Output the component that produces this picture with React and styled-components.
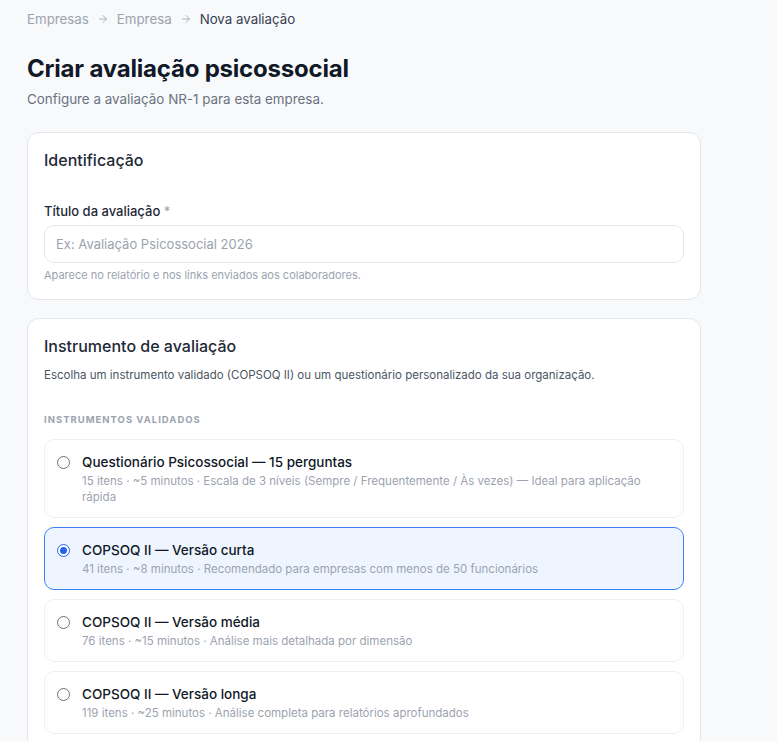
import React from "react";
import styled, { createGlobalStyle } from "styled-components";

const Global = createGlobalStyle`
  html, body { margin: 0; padding: 0; background: #f8f9fb; }
  body { font-family: Inter, "Noto Sans", sans-serif; color: #111827; -webkit-font-smoothing: antialiased; }
  * { box-sizing: border-box; }
`;

const Page = styled.div`
  padding: 9px 27px 40px;
  max-width: 728px;
`;

const Crumbs = styled.nav`
  display: flex;
  align-items: center;
  gap: 8px;
  font-size: 13.3px;
  line-height: 20px;
  color: #9ca3af;
`;

const Crumb = styled.span`
  color: ${(p) => (p.$current ? "#374151" : "#9ca3af")};
`;

const Arrow = styled.span`
  display: inline-flex;
  color: #a3a8b3;
`;

const Title = styled.h1`
  margin: 24px 0 0;
  font-size: 24px;
  line-height: 32px;
  font-weight: 700;
  letter-spacing: -0.2px;
  color: #111827;
`;

const Subtitle = styled.p`
  margin: 4px 0 0;
  font-size: 13.4px;
  line-height: 20px;
  color: #6b7280;
`;

const Card = styled.section`
  background: #fff;
  border: 1px solid #e5e7eb;
  border-radius: 12px;
  padding: 15px 16px 16px;
  margin-top: ${(p) => p.$mt}px;
`;

const CardTitle = styled.h2`
  margin: 0;
  font-size: 16px;
  line-height: 24px;
  font-weight: 500;
  color: #1f2937;
`;

const Label = styled.label`
  display: block;
  margin-top: 29px;
  font-size: 13px;
  line-height: 20px;
  font-weight: 500;
  color: #1f2937;
`;

const Required = styled.span`
  color: #9ca3af;
  font-weight: 400;
`;

const Input = styled.input`
  display: block;
  width: 100%;
  height: 38px;
  margin-top: 4px;
  border: 1px solid #e5e7eb;
  border-radius: 10px;
  padding: 0 11px;
  font-family: inherit;
  font-size: 13px;
  color: #111827;
  background: #fff;
  outline: none;
  &::placeholder { color: #9ca3af; }
`;

const Help = styled.p`
  margin: 4px 0 0;
  font-size: 11px;
  line-height: 16px;
  color: #9ca3af;
`;

const CardDesc = styled.p`
  margin: 9px 0 0;
  font-size: 11.5px;
  line-height: 16px;
  color: #4b5563;
`;

const SectionLabel = styled.div`
  margin-top: 29px;
  font-size: 9.5px;
  line-height: 16px;
  font-weight: 700;
  letter-spacing: 1px;
  text-transform: uppercase;
  color: #9ca3af;
`;

const Options = styled.div`
  display: flex;
  flex-direction: column;
  gap: 9px;
  margin-top: 11px;
`;

const Option = styled.label`
  display: flex;
  align-items: flex-start;
  gap: 12px;
  padding: 12px;
  border: 1px solid ${(p) => (p.$selected ? "#3b82f6" : "#eef0f3")};
  background: ${(p) => (p.$selected ? "#eef5ff" : "#fff")};
  border-radius: 10px;
  cursor: pointer;
`;

const Radio = styled.span`
  flex: none;
  width: 13px;
  height: 13px;
  margin-top: 3.5px;
  border-radius: 50%;
  border: 1px solid ${(p) => (p.$checked ? "#2563eb" : "#6b7280")};
  background: #fff;
  display: flex;
  align-items: center;
  justify-content: center;
  &::after {
    content: "";
    width: 7px;
    height: 7px;
    border-radius: 50%;
    background: ${(p) => (p.$checked ? "#2563eb" : "transparent")};
  }
`;

const OptionBody = styled.div`
  display: flex;
  flex-direction: column;
  gap: 1px;
`;

const OptionTitle = styled.div`
  font-size: 13.5px;
  line-height: 20px;
  font-weight: 500;
  color: #111827;
`;

const OptionDesc = styled.div`
  font-size: 11.5px;
  line-height: 16px;
  color: #9ca3af;
`;

const ArrowIcon = () => (
  <Arrow>
    <svg width="12" height="12" viewBox="0 0 24 24" fill="none" stroke="currentColor" strokeWidth="1.8" strokeLinecap="round" strokeLinejoin="round">
      <path d="M5 12h14" />
      <path d="m12 5 7 7-7 7" />
    </svg>
  </Arrow>
);

const options = [
  {
    title: "Questionário Psicossocial — 15 perguntas",
    desc: "15 itens · ~5 minutos · Escala de 3 níveis (Sempre / Frequentemente / Às vezes) — Ideal para aplicação rápida",
  },
  {
    title: "COPSOQ II — Versão curta",
    desc: "41 itens · ~8 minutos · Recomendado para empresas com menos de 50 funcionários",
    selected: true,
  },
  {
    title: "COPSOQ II — Versão média",
    desc: "76 itens · ~15 minutos · Análise mais detalhada por dimensão",
  },
  {
    title: "COPSOQ II — Versão longa",
    desc: "119 itens · ~25 minutos · Análise completa para relatórios aprofundados",
  },
];

export default function App() {
  return (
    <>
      <Global />
      <Page>
        <Crumbs>
          <Crumb>Empresas</Crumb>
          <ArrowIcon />
          <Crumb>Empresa</Crumb>
          <ArrowIcon />
          <Crumb $current>Nova avaliação</Crumb>
        </Crumbs>
        <Title>Criar avaliação psicossocial</Title>
        <Subtitle>Configure a avaliação NR-1 para esta empresa.</Subtitle>

        <Card $mt={23}>
          <CardTitle>Identificação</CardTitle>
          <Label htmlFor="titulo">
            Título da avaliação <Required>*</Required>
          </Label>
          <Input id="titulo" placeholder="Ex: Avaliação Psicossocial 2026" />
          <Help>Aparece no relatório e nos links enviados aos colaboradores.</Help>
        </Card>

        <Card $mt={18}>
          <CardTitle>Instrumento de avaliação</CardTitle>
          <CardDesc>
            Escolha um instrumento validado (COPSOQ II) ou um questionário personalizado da sua organização.
          </CardDesc>
          <SectionLabel>Instrumentos validados</SectionLabel>
          <Options>
            {options.map((o) => (
              <Option key={o.title} $selected={o.selected}>
                <Radio $checked={o.selected} />
                <OptionBody>
                  <OptionTitle>{o.title}</OptionTitle>
                  <OptionDesc>{o.desc}</OptionDesc>
                </OptionBody>
              </Option>
            ))}
          </Options>
        </Card>
      </Page>
    </>
  );
}
